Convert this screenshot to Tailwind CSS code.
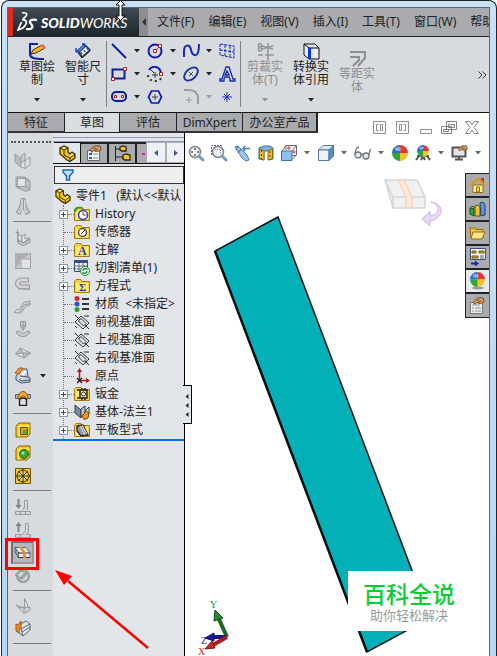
<!DOCTYPE html>
<html lang="zh-CN">

<head>
      <meta charset="UTF-8">
      <meta name="viewport" content="width=device-width, initial-scale=1.0">
      <title>SolidWorks</title>
      <script src="https://cdn.jsdelivr.net/npm/@tailwindcss/browser@4"></script>
</head>

<body class="bg-white font-['Noto_Sans','Noto_Sans_CJK_SC',sans-serif] text-[12px] text-[#222]">
      <!-- Shared shapes -->
      <svg class="hidden">
            <symbol id="folder" viewBox="0 0 16 16">
                  <path d="M.5 3.500L2 1.500h5l1 2h7.500v11H.5z" fill="#f7d23c" stroke="#a8791a" />
                  <path d="M2 5h12v8.500H2z" fill="#ffe873" />
            </symbol>
            <symbol id="part" viewBox="0 0 17 17">
                  <path d="M1 3l4-2 4 2v4l2 2 2-2 3 2v4l-5 3.500-3-1.500-7-6z" fill="#f5c518" stroke="#3d2c00" stroke-width="1.300" />
                  <path d="M1 3l4 2 4-2M5 5v5l6 3 5-4M11 13v3" fill="none" stroke="#3d2c00" />
                  <path d="M3 3l2-1 2 1-2 1zM11 10l2-1.500 1.500 1-3 2z" fill="#fff3a0" />
            </symbol>
            <symbol id="plane" viewBox="0 0 16 16">
                  <path d="M1 8l6-6 8 7-6 6zM1 1l14 14M10 2l5 0M1 12l2 2" fill="none" stroke="#333" />
                  <path d="M4.500 7L7 4.500 12 9.500 9.500 12z" fill="#e2e5ea" stroke="#333" />
            </symbol>
            <symbol id="ball" viewBox="0 0 16 16">
                  <path d="M8 8V0a8 8 0 0 1 8 8z" fill="#e5382c" />
                  <path d="M8 8h8a8 8 0 0 1-8 8z" fill="#f2c12b" />
                  <path d="M8 8v8a8 8 0 0 1-8-8z" fill="#2fa836" />
                  <path d="M8 8H0a8 8 0 0 1 8-8z" fill="#2a6fd0" />
                  <ellipse cx="6" cy="4" rx="3" ry="2" fill="#fff" opacity=".45" />
            </symbol>
            <symbol id="lens" viewBox="0 0 17 17">
                  <path d="M11 11l4 4" stroke="#6f9ccc" stroke-width="3" stroke-linecap="round" />
                  <circle cx="7" cy="7" r="5.500" fill="#f2f5f8" stroke="#81868c" stroke-width="1.500" />
            </symbol>
            <symbol id="down" viewBox="0 0 6 4">
                  <path d="M0 0h6L3 3.500z" fill="currentColor" />
            </symbol>
            <symbol id="hand" viewBox="0 0 17 17">
                  <path d="M5 5l4-4h6l1 4-4 2-4-1-2 2z" fill="#e0a566" stroke="#704018" />
                  <path d="M8 4l3-1m-2 3l4-2" stroke="#704018" fill="none" />
            </symbol>
      </svg>

      <div class="relative min-h-screen overflow-hidden pl-px">
            <!-- Window frame -->
            <div class="flex min-h-screen flex-col rounded-t-lg border-x border-t border-[#1c2430] bg-gradient-to-b from-[#c9e0f5] to-[#b9d7f2] pt-1.5 pr-1.5 pl-[5px]">
                  <div class="flex flex-1 flex-col border-x border-t border-[#5d6976] bg-[#d7dade]">

                        <!-- Menu bar -->
                        <header class="flex h-[29px] border-b border-[#222] bg-[#a9abae]">
                              <div class="flex w-[131px] shrink-0 items-center border-l-[5px] border-[#e02a1c] bg-gradient-to-b from-[#414b54] to-[#1e262d] text-white">
                                    <svg class="ml-1 shrink-0" width="22" height="22" viewBox="0 0 22 22" fill="none" stroke="#fff" stroke-width="1.700" aria-hidden="true">
                                          <path d="M5 2c5-1 7 1 1 6" />
                                          <path d="M5 9c8-1 4 8-4 10l3.500-8" />
                                          <path d="M20 9c-6-1-9 1-6 4 3 3 1 6-5 5" stroke-width="2.200" />
                                    </svg>
                                    <span class="ml-0.5 font-['Lato'] text-[14px] italic"><b class="font-black">SOLID</b>WORKS</span>
                              </div>
                              <button class="grid w-[9px] shrink-0 place-items-center bg-[#8c8e91]" aria-label="收起菜单">
                                    <svg width="4" height="8" viewBox="0 0 4 8"><path d="M4 0v8L0 4z" fill="#333" /></svg>
                              </button>
                              <nav class="flex min-w-0 items-center gap-3.5 overflow-hidden pl-[9px] whitespace-nowrap">
                                    <a href="#">文件(F)</a>
                                    <a href="#">编辑(E)</a>
                                    <a href="#">视图(V)</a>
                                    <a href="#">插入(I)</a>
                                    <a href="#">工具(T)</a>
                                    <a href="#">窗口(W)</a>
                                    <a href="#">帮助</a>
                              </nav>
                        </header>

                        <!-- Ribbon -->
                        <div class="flex h-[76px] border-b border-[#111] pl-1.5 leading-[13px]">
                              <button class="flex w-[46px] flex-col items-center pt-1.5">
                                    <svg width="18" height="17" viewBox="0 0 18 17">
                                          <path d="M10 1H2v10c0 4 4 5 14 5" fill="none" stroke="#0b1fb0" stroke-width="2" />
                                          <path d="M3 11l2-4 9-5 3 3-9 5z" fill="#f7b52c" stroke="#523000" />
                                          <path d="M13 2.500L15 1l3 3-2 2z" fill="#e86a5a" />
                                    </svg>
                                    <span class="w-9 break-all">草图绘制</span>
                                    <svg class="mt-3" width="6" height="4"><use href="#down" /></svg>
                              </button>
                              <button class="flex w-[46px] flex-col items-center pt-1.5">
                                    <svg width="17" height="17" viewBox="0 0 17 17">
                                          <path d="M4 9L11 3l4 4-8 7z" fill="#eef3fb" stroke="#234" stroke-width="1.500" />
                                          <path d="M1 9l9-8M1 9V5m0 4h3M10 1H7m3 0v3M7 11l-1-2m4 0L9 7m4 0l-1-2" fill="none" stroke="#1746c9" stroke-width="1.500" />
                                          <path d="M3 10l4 5 8-7" fill="none" stroke="#222" />
                                    </svg>
                                    <span class="w-9 break-all">智能尺寸</span>
                                    <svg class="mt-3" width="6" height="4"><use href="#down" /></svg>
                              </button>
                              <div class="mt-1 h-[66px] w-px bg-[#7d8084]"></div>

                              <div class="mt-0.5 grid h-[69px] grid-cols-[24px_12px_24px_12px_24px_12px_24px] grid-rows-3 place-items-center">
                                    <button aria-label="直线"><svg width="16" height="16"><path d="M1 1l14 14" stroke="#0b1f9c" stroke-width="2" /></svg></button>
                                    <button aria-label="直线选项"><svg width="6" height="4"><use href="#down" /></svg></button>
                                    <button aria-label="圆">
                                          <svg width="16" height="16"><circle cx="8" cy="8" r="6.500" fill="none" stroke="#0b1fb0" stroke-width="2" /><path d="M8 8l4-4" stroke="#444" /><path d="M6.500 6.500h3v3h-3zM11.500 1.500h3v3h-3z" fill="#fff" stroke="#b01818" /></svg>
                                    </button>
                                    <button aria-label="圆选项"><svg width="6" height="4"><use href="#down" /></svg></button>
                                    <button aria-label="样条曲线"><svg width="17" height="16"><path d="M1 14V8c0-7 6-7 7-1s8 10 8-6" fill="none" stroke="#1428b8" stroke-width="2" /></svg></button>
                                    <button aria-label="样条曲线选项"><svg width="6" height="4"><use href="#down" /></svg></button>
                                    <button aria-label="基准面">
                                          <svg width="16" height="16" fill="none" stroke="#1428b8" stroke-dasharray="3 1"><path d="M1 1v11l14 3V3zM1 7l14 2M6 2v11M11 3v11" /></svg>
                                    </button>

                                    <button aria-label="矩形">
                                          <svg width="16" height="14"><path d="M1.500 2.500h12v9h-12z" fill="none" stroke="#0b1f9c" stroke-width="2" /><path d="M12.500 .5h3v3h-3zM.5 10.500h3v3h-3z" fill="#fff" stroke="#b01818" /></svg>
                                    </button>
                                    <button aria-label="矩形选项"><svg width="6" height="4"><use href="#down" /></svg></button>
                                    <button aria-label="圆弧">
                                          <svg width="16" height="16" fill="none"><path d="M1 9c0 8 14 8 14 0" stroke="#333" stroke-width="2" stroke-dasharray="2 3" /><path d="M2 4c3-5 11-4 12 3" stroke="#0b1fb0" stroke-width="2" /><path d="M8 6v6M5 9h6M4 4l3 3" stroke="#333" /><path d="M12.500 6.500h3v3h-3z" fill="#fff" stroke="#b01818" /></svg>
                                    </button>
                                    <button aria-label="圆弧选项"><svg width="6" height="4"><use href="#down" /></svg></button>
                                    <button aria-label="椭圆">
                                          <svg width="16" height="16"><ellipse cx="8" cy="8" rx="8" ry="5" transform="rotate(-42 8 8)" fill="none" stroke="#1b2f9e" stroke-width="1.800" /><path d="M6 6l4 4m0-4l-4 4" stroke="#555" /></svg>
                                    </button>
                                    <button aria-label="椭圆选项"><svg width="6" height="4"><use href="#down" /></svg></button>
                                    <button aria-label="文字">
                                          <svg width="17" height="16" fill="none" stroke="#1428b8"><path d="M7 1h3l4 12h2v2h-5v-2l-1-2H6l-1 2v2H1v-2h2zM8 5L6 9h4z" stroke-width="1.300" /></svg>
                                    </button>

                                    <button aria-label="槽口">
                                          <svg width="16" height="11"><rect x="1" y="1" width="14" height="9" rx="4" fill="none" stroke="#0b1f9c" stroke-width="2" /><path d="M3.500 4.500h2v2h-2zM10.500 4.500h2v2h-2z" fill="#fff" stroke="#b01818" /></svg>
                                    </button>
                                    <button aria-label="槽口选项"><svg width="6" height="4"><use href="#down" /></svg></button>
                                    <button aria-label="多边形">
                                          <svg width="16" height="14"><path d="M4.500 1h7l3 6-3 6h-7l-3-6z" fill="none" stroke="#0b1fb0" stroke-width="1.700" /><path d="M8 4v6M5 7h6" stroke="#444" /></svg>
                                    </button>
                                    <span></span>
                                    <button aria-label="圆角" disabled><svg width="16" height="16" fill="none" stroke="#9b9da0"><path d="M1 1h5c6 0 9 3 9 9v5" stroke-width="2" /><path d="M6 8v6M3 11h6" /></svg></button>
                                    <button class="text-[#9b9da0]" aria-label="圆角选项" disabled><svg width="6" height="4"><use href="#down" /></svg></button>
                                    <button aria-label="点"><svg width="10" height="10"><path d="M5 0v10M0 5h10M2 2l6 6M8 2L2 8" stroke="#2030c8" /></svg></button>
                              </div>
                              <div class="mx-px mt-1 h-[66px] w-px bg-[#7d8084]"></div>

                              <button class="flex w-[46px] flex-col items-center pt-1.5 text-[#8c8e91]" disabled>
                                    <svg width="17" height="17" viewBox="0 0 17 17" fill="none" stroke="#929497" stroke-width="1.500">
                                          <path d="M11 0v17M1 12h5M8 12h9M5 3l11 3M5 6l11-3" />
                                          <circle cx="3" cy="2.500" r="1.700" /><circle cx="3" cy="6.500" r="1.700" />
                                    </svg>
                                    <span class="w-9 text-center break-all">剪裁实体(T)</span>
                                    <svg class="mt-3" width="6" height="4"><use href="#down" /></svg>
                              </button>
                              <button class="flex w-[46px] flex-col items-center pt-1.5">
                                    <svg width="17" height="17" viewBox="0 0 17 17">
                                          <path d="M1 1h11l4 4v11H6l-5-4zM1 1l5 4h10M6 5v11" fill="#e9ecf0" stroke="#111" />
                                          <path d="M6.500 5v11" stroke="#1030f0" stroke-width="3" />
                                    </svg>
                                    <span class="w-9 break-all">转换实体引用</span>
                                    <svg class="mt-3" width="6" height="4"><use href="#down" /></svg>
                              </button>
                              <button class="flex w-[46px] flex-col items-center pt-3.5 text-[#8c8e91]" disabled>
                                    <svg width="17" height="16" viewBox="0 0 17 16" fill="none" stroke="#8c8e91" stroke-width="2"><path d="M1 1h15v6l-7 8M1 6h9v3l-6 6" /></svg>
                                    <span class="w-9 text-center break-all">等距实体</span>
                              </button>
                              <button class="mr-0.5 ml-auto text-[#333]" aria-label="更多">
                                    <svg width="9" height="8" fill="none" stroke="#333"><path d="M.5.5L4 4 .5 7.500M4.500.5L8 4 4.500 7.500" /></svg>
                              </button>
                        </div>

                        <!-- Command tabs and document window buttons -->
                        <div class="relative z-10 flex h-5 bg-white">
                              <nav class="flex shrink-0 border-b-2 border-[#333] bg-[#a9abae] leading-[17px]">
                                    <button class="w-[57px] border-r border-[#222]">特征</button>
                                    <button class="-mb-0.5 w-[55px] border-r border-b border-[#222] bg-[#dadde1]">草图</button>
                                    <button class="w-[57px] border-r border-[#222]">评估</button>
                                    <button class="w-[66px] border-r border-[#222]">DimXpert</button>
                                    <button class="w-[75px] border-r-2 border-[#222]">办公室产品</button>
                              </nav>
                              <div class="mt-2 mr-1.5 ml-auto flex h-[13px]">
                                    <button class="grid w-[23px] place-items-center" aria-label="左侧平铺"><svg width="13" height="13" fill="none" stroke="#8b8f96"><path d="M.5.5h12v12H.5zM5.500 3.500h-2v6h2M7.500 3.500h2v6h-2z" /></svg></button>
                                    <button class="grid w-[23px] place-items-center" aria-label="右侧平铺"><svg width="13" height="13" fill="none" stroke="#8b8f96"><path d="M.5.5h12v12H.5zM3.500 3.500h2v6h-2zM7.500 3.500h2v6h-2" /></svg></button>
                                    <button class="grid w-[23px] place-items-center" aria-label="最小化"><svg width="12" height="13" fill="#fff" stroke="#8b8f96"><path d="M.5 8.500h11v4H.5z" /></svg></button>
                                    <button class="grid w-[23px] place-items-center" aria-label="还原"><svg width="16" height="13" fill="#fff" stroke="#7d8188"><path d="M5.500.5h10v8h-10zM7.500 3.500h6v3h-6zM.5 5.500h10v7H.5zM2.500 8.500h5v2h-5z" /></svg></button>
                                    <button class="grid w-[23px] place-items-center" aria-label="关闭"><svg width="14" height="13" fill="#fff" stroke="#7d8188"><path d="M.5.500h4L7 4l2.500-3.500h4L9 6.500l4.500 6h-4L7 9l-2.500 3.500h-4l4.500-6z" /></svg></button>
                              </div>
                        </div>

                        <div class="flex flex-1">
                              <!-- Sheet metal toolbar -->
                              <aside class="flex w-[45px] shrink-0 flex-col pt-2 pl-[3px]">
                                    <div class="mb-1.5 w-10 border-t-2 border-dotted border-[#555]"></div>
                                    <button class="grid h-[23px] w-[23px] place-items-center" aria-label="基体法兰" disabled><svg width="17" height="17" stroke="#9b9da0"><path d="M1 2l6 5v8l-6-5z" fill="#b9bbbe" /><path d="M7 7v8l4 1.500 5-4V5l-5 4z" fill="#dfe0e2" /><path d="M7 4l4-3v7L7 11z" fill="#cccdd0" /><path d="M11 9v7" /></svg></button>
                                    <button class="grid h-[23px] w-[23px] place-items-center" aria-label="转换到钣金" disabled><svg width="16" height="16" stroke="#999b9e"><path d="M1 1h9l5 4v9l-4 1.500L1 11z" fill="#c0c2c5" /><path d="M2.500 2.500h8v8h-8z" fill="#e3e4e6" /><path d="M10.500 2.500L15 6M10.500 10.500L15 13M2.500 10.500L6 13" fill="none" /></svg></button>
                                    <button class="grid h-[23px] w-[23px] place-items-center" aria-label="放样折弯" disabled><svg width="16" height="17" stroke="#98999c"><path d="M6 .5h4l1 7 4 7-4 2-2-5H7l-2 5-4-2 4-7z" fill="#bcbec1" /><path d="M7 1v10L4 15M10 2l-1 9 2 4" fill="none" stroke="#e4e5e7" /><path d="M8.500 1v11" /></svg></button>
                                    <hr class="mt-[3px] mb-1 ml-0.5 w-[38px] border-[#77797c]">
                                    <button class="grid h-[23px] w-[23px] place-items-center" aria-label="边线法兰" disabled><svg width="16" height="16" stroke="#98999c"><path d="M2.500 0v12M.5 2.500h4" fill="none" /><path d="M3 4l4 2v6l-4-2z" fill="#d9dadd" /><path d="M3 10l5 3 7-4v3l-7 4-5-3z" fill="#c2c4c7" /><path d="M7 6l3-2v5l5-1-7 5-1-1z" fill="#e3e4e6" /></svg></button>
                                    <button class="grid h-[23px] w-[23px] place-items-center" aria-label="斜接法兰" disabled><svg width="16" height="16"><path d="M0 0h16L10 5H5v5l-5 6z" fill="#adafb2" /><path d="M16 0v16H0l5-6V5h5z" fill="#c9cbce" /><path d="M6 6h10v10H6z" fill="#e1e2e4" /><path d="M0 0l6 6h9.500M6 6v9.500M15.500 0v15.500H0" stroke="#9fa1a4" fill="none" /></svg></button>
                                    <button class="grid h-[23px] w-[23px] place-items-center" aria-label="褶边" disabled><svg width="16" height="14"><path d="M14 3H7C1 3 1 10 7 10h8" fill="none" stroke="#98999c" stroke-width="5" /><path d="M13 3H7C1 3 1 10 7 10h7" fill="none" stroke="#d3d4d7" stroke-width="3" /><path d="M3 12h12" stroke="#98999c" /></svg></button>
                                    <button class="grid h-[23px] w-[23px] place-items-center" aria-label="转折" disabled><svg width="17" height="14" fill="#d6d7da" stroke="#98999c"><path d="M.5 12.500l2-3h3l4-7 6.500-1.500v4l-4 1-5 7z" /><path d="M6 12l4-7 6-1.500" fill="none" /></svg></button>
                                    <button class="grid h-[23px] w-[23px] place-items-center" aria-label="绘制的折弯" disabled><svg width="16" height="17" fill="#c9cbce" stroke="#939598"><path d="M5.500.5h5v5l-2.500 4-2.500-4zM5.500 5h5M8 1v8M1 11l3-1c3 3 6 3 8 0l3 1c-3 6-11 6-14 0z" /></svg></button>
                                    <button class="grid h-[23px] w-[23px] place-items-center" aria-label="交叉折断" disabled><svg width="16" height="12" stroke="#98999c"><path d="M.5 7L5 1l10.500 5L9 11z" fill="#e0e1e3" /><path d="M5 1l3 5-7.500 1M8 6h7.500L9 11z" fill="#b9bbbe" /></svg></button>
                                    <div class="flex h-[23px] items-center">
                                          <button class="grid h-[23px] w-[23px] place-items-center" aria-label="边角"><svg width="17" height="17"><path d="M2 9L8 2h5l1 8 2 1v4l-9 1-5-3z" fill="#c5d0dc" stroke="#4a5765" /><path d="M6 9l8 1M5 12l2 2 9-1" stroke="#4a5765" fill="none" /><path d="M8 8l4-4" stroke="#fff" stroke-width="2" /><path d="M1 6l4-5h4L5 7z" fill="#f29a35" stroke="#aa5d10" /></svg></button>
                                          <button class="ml-1.5" aria-label="边角选项"><svg width="6" height="4"><use href="#down" /></svg></button>
                                    </div>
                                    <button class="grid h-[23px] w-[23px] place-items-center" aria-label="成形工具"><svg width="16" height="15"><path d="M.5 3.500H4v4H.5zM12 3.500h3.500v4H12z" fill="#b8c2cd" stroke="#53606d" /><path d="M3 5c2-6 8-6 10 0v3h-2C10 4 6 4 5 8H3z" fill="#f2a336" stroke="#7d5010" /><path d="M4.500 14.500V10c0-4 7-4 7 0v4.500z" fill="#ddd" stroke="#222" stroke-width="1.400" /></svg></button>
                                    <hr class="mt-[3px] mb-1 ml-0.5 w-[38px] border-[#77797c]">
                                    <button class="grid h-[23px] w-[23px] place-items-center" aria-label="拉伸切除"><svg width="16" height="16"><path d="M1 4l3-3h11v11l-3 3H1z" fill="#f3c81d" stroke="#8a6400" /><path d="M4 4h11M4 4v11" stroke="#fff08a" /><path d="M5.500 5.500h7v7h-7z" fill="#d9a50c" stroke="#6f5000" /><path d="M8 8h4v4H8z" fill="#45a845" /></svg></button>
                                    <button class="grid h-[23px] w-[23px] place-items-center" aria-label="简单直孔"><svg width="16" height="16"><path d="M1 4l3-3h11v11l-3 3H1z" fill="#f3c81d" stroke="#8a6400" /><path d="M4 4h11M4 4v11" stroke="#fff08a" /><circle cx="9" cy="9" r="4.500" fill="#37a93a" stroke="#305c00" /><circle cx="8" cy="8" r="1.500" fill="#a3e39c" /></svg></button>
                                    <button class="grid h-[23px] w-[23px] place-items-center" aria-label="通风口"><svg width="16" height="16"><path d="M.5.5h15v15H.5z" fill="#f5c91d" stroke="#6a4d00" /><g fill="none" stroke="#3c2f00"><circle cx="8" cy="8" r="6" /><circle cx="8" cy="8" r="3" stroke="#fff" /><path d="M8 1v14M1 8h14M3 3l10 10M13 3L3 13" /></g></svg></button>
                                    <hr class="mt-[3px] mb-1 ml-0.5 w-[38px] border-[#77797c]">
                                    <button class="grid h-[23px] w-[23px] place-items-center" aria-label="展开" disabled><svg width="16" height="16" fill="#d3d5d8" stroke="#98999c"><path d="M.5 12.500h15v3H.5zM5.500 12v3M10.500 12v3M8.500 11l1-4V1.500h3V11" /><path d="M3.500 0v8" stroke-width="2" stroke="#808285" /><path d="M.5 6h6L3.500 10z" fill="#808285" stroke="none" /></svg></button>
                                    <button class="grid h-[23px] w-[23px] place-items-center" aria-label="折叠" disabled><svg width="16" height="16" fill="#d3d5d8" stroke="#98999c"><path d="M.5 12.500h7l3-4v-7h3V9l-2 3.500h4v3H.5zM5.500 12v3" /><path d="M3.500 10V3" stroke-width="2" stroke="#808285" /><path d="M.5 4h6L3.500 0z" fill="#808285" stroke="none" /></svg></button>
                                    <button class="grid h-[23px] w-[23px] place-items-center border-2 border-[#6c6f73] border-r-[#999] border-b-[#999] bg-[#b4b7bb]" aria-label="展平" aria-pressed="true"><svg width="17" height="13"><path d="M1 1.500h11l4 5v5H4.500V7z" fill="#e7eaee" stroke="#5d6670" /><path d="M1 1.500L4.500 7v4.500L1 6z" fill="#9aa5b2" stroke="#5d6670" /><path d="M4 7h12M4 11.500h12" stroke="#333" /><path d="M5 1h3l4 6v5H9V7z" fill="#f08a1d" /></svg></button>
                                    <button class="grid h-[23px] w-[23px] place-items-center" aria-label="不折弯" disabled><svg width="17" height="16" fill="none" stroke="#98999c"><path d="M1 7l5-4 8 2-5 6z" fill="#cfd1d4" /><circle cx="9" cy="8" r="6" stroke-width="2" /><path d="M5 12l8-8" stroke-width="2" /></svg></button>
                                    <hr class="my-[3px] ml-0.5 w-[38px] border-[#77797c]">
                                    <button class="grid h-[23px] w-[23px] place-items-center" aria-label="切口" disabled><svg width="16" height="16" stroke="#98999c"><path d="M9.500.5l3 6v4l-3-1z" fill="#dcdddf" /><path d="M1 7l5 2 3 1 6-1v3l-6 3.500z" fill="#d0d2d5" /><path d="M9 10v5M4 10l5-1" fill="none" /></svg></button>
                                    <button class="grid h-[23px] w-[23px] place-items-center" aria-label="插入折弯"><svg width="16" height="17"><path d="M6 4l5-3 4 3v6l-7 6-5-4z" fill="#e2e6eb" stroke="#56616d" /><path d="M6 9l9-5M6 9l2 7M7 12l8-5" fill="none" stroke="#56616d" /><path d="M1 4l2 1 3-4v7L4 9v4l-3-2z" fill="#f28c22" stroke="#a95706" /></svg></button>
                                    <hr class="my-[3px] ml-0.5 w-[38px] border-[#77797c]">
                              </aside>

                              <!-- Feature tree -->
                              <section class="relative w-[132px] shrink-0 border-r border-black bg-[#e2e5ea] pt-1">
                                    <div class="h-[5px] border-y border-[#8f97b8]"></div>
                                    <div class="flex h-[22px] overflow-hidden border-b border-[#111] pl-px">
                                          <button class="grid w-[27px] shrink-0 place-items-center border-t border-r border-[#111] bg-[#e2e5ea]" aria-label="设计树"><svg width="17" height="17"><use href="#part" /></svg></button>
                                          <button class="grid w-7 shrink-0 place-items-center border-t-2 border-r-2 border-[#222] bg-[#a9abae]" aria-label="属性"><svg width="17" height="17"><path d="M1.500 5.500h12v10h-12z" fill="#eef3fa" stroke="#667" /><path d="M3 8h3v2H3zM3 12h3v2H3z" fill="#2e62c8" /><path d="M7 9h5M7 13h5" stroke="#888" /><use href="#hand" width="16" height="16" /></svg></button>
                                          <button class="grid w-7 shrink-0 place-items-center border-t-2 border-r-2 border-[#222] bg-[#a9abae]" aria-label="配置"><svg width="17" height="17"><path d="M1.500 1v15M2 4h5M2 12h7" stroke="#222" fill="none" /><path d="M6 2l3-1 3 1v4H8L6 5zM9 10l3-1 4 1v5h-5l-2-1z" fill="#f4c61f" stroke="#332400" stroke-width="1.300" /></svg></button>
                                          <button class="w-[9px] shrink-0 border-t-2 border-[#222] bg-[#a9abae]" aria-label="尺寸专家"><svg width="9" height="4"><path d="M5 1h3v2H5z" fill="#d117c8" /></svg></button>
                                          <button class="grid w-5 shrink-0 place-items-center border border-[#aaadb3] bg-[#eff1f4]" aria-label="向左"><svg width="4" height="6"><path d="M4 0v6L0 3z" fill="#46598c" /></svg></button>
                                          <button class="grid w-5 shrink-0 place-items-center border border-[#aaadb3] bg-[#eff1f4]" aria-label="向右"><svg width="4" height="6"><path d="M0 0v6l4-3z" fill="#46598c" /></svg></button>
                                    </div>
                                    <label class="mt-0.5 ml-px flex h-[18px] items-center border border-[#333] bg-[#eeeff1] pl-[7px]">
                                          <svg class="shrink-0" width="12" height="12"><path d="M1 1h10v2L7.500 7v4h-3V7L1 3z" fill="#bfe3fb" stroke="#1565c0" stroke-width="1.500" /></svg>
                                          <input class="w-full min-w-0 bg-transparent outline-none" aria-label="筛选">
                                    </label>

                                    <div class="mt-[3px] flex h-[18px] items-center overflow-hidden pl-0.5 whitespace-pre">
                                          <svg class="shrink-0" width="16" height="16"><use href="#part" /></svg>
                                          <span class="ml-[5px]">零件1   (默认&lt;&lt;默认</span>
                                    </div>
                                    <ul class="ml-2.5 border-l border-dotted border-[#777] leading-[18px]">
                                          <li class="-ml-[5px] flex h-[18px] items-center"><button class="grid h-[9px] w-[9px] place-items-center border border-[#8a95a5] bg-white" aria-label="展开 History"><svg width="5" height="5"><path d="M0 2.500h5M2.500 0v5" stroke="#234a8c" /></svg></button><span class="w-1.5 border-t border-dotted border-[#777]"></span>
                                                <svg width="16" height="16"><use href="#folder" /><circle cx="9" cy="9" r="4.500" fill="#fff" stroke="#2842c2" stroke-width="1.500" /><path d="M9 6v3h3" stroke="#c22" fill="none" /><path d="M1 6c0-4 5-6 8-3" stroke="#2f9b35" stroke-width="2" fill="none" /></svg><span class="ml-[5px]">History</span></li>
                                          <li class="flex h-[18px] items-center"><span class="w-2.5 border-t border-dotted border-[#777]"></span>
                                                <svg width="16" height="16"><use href="#folder" /><circle cx="8.500" cy="8.500" r="4" fill="#fff" stroke="#555" stroke-width="1.500" /><path d="M7 10l4-4" stroke="#222" /></svg><span class="ml-[5px]">传感器</span></li>
                                          <li class="-ml-[5px] flex h-[18px] items-center"><button class="grid h-[9px] w-[9px] place-items-center border border-[#8a95a5] bg-white" aria-label="展开 注解"><svg width="5" height="5"><path d="M0 2.500h5M2.500 0v5" stroke="#234a8c" /></svg></button><span class="w-1.5 border-t border-dotted border-[#777]"></span>
                                                <svg width="16" height="16"><use href="#folder" /><text x="4" y="13" font-family="Liberation Serif" font-size="12" font-weight="bold" fill="#1a3fb5">A</text></svg><span class="ml-[5px]">注解</span></li>
                                          <li class="-ml-[5px] flex h-[18px] items-center"><button class="grid h-[9px] w-[9px] place-items-center border border-[#8a95a5] bg-white" aria-label="展开 切割清单"><svg width="5" height="5"><path d="M0 2.500h5M2.500 0v5" stroke="#234a8c" /></svg></button><span class="w-1.5 border-t border-dotted border-[#777]"></span>
                                                <svg width="16" height="16"><path d="M.5.5h13v11H.5z" fill="#f3f6fb" stroke="#3c4960" /><path d="M0 0h14v3H0z" fill="#3c4f80" /><path d="M1 6h12M1 9h12M5 3v8M9 3v8" stroke="#5f6c86" /><circle cx="11" cy="11" r="4.500" fill="#e8f7e8" stroke="#23933a" /><path d="M9 11c0-3 4-3 4-1M13 11c0 3-4 3-4 1" stroke="#138529" stroke-width="1.300" fill="none" /></svg><span class="ml-[5px]">切割清单(1)</span></li>
                                          <li class="-ml-[5px] flex h-[18px] items-center"><button class="grid h-[9px] w-[9px] place-items-center border border-[#8a95a5] bg-white" aria-label="展开 方程式"><svg width="5" height="5"><path d="M0 2.500h5M2.500 0v5" stroke="#234a8c" /></svg></button><span class="w-1.5 border-t border-dotted border-[#777]"></span>
                                                <svg width="16" height="16"><use href="#folder" /><text x="5" y="13" font-family="Liberation Serif" font-size="11" font-weight="bold" fill="#1a3fb5">Σ</text></svg><span class="ml-[5px]">方程式</span></li>
                                          <li class="flex h-[18px] items-center whitespace-pre"><span class="w-2.5 border-t border-dotted border-[#777]"></span><svg width="16" height="16"><circle cx="3" cy="2.500" r="2.500" fill="#d92626" /><circle cx="3" cy="8" r="2.500" fill="#2b4fd0" /><circle cx="3" cy="13.500" r="2.500" fill="#28a038" /><path d="M8 3h7M8 8h7M8 13h7" stroke="#333" stroke-width="1.800" /></svg><span class="ml-[5px]">材质  &lt;未指定&gt;</span></li>
                                          <li class="flex h-[18px] items-center"><span class="w-2.5 border-t border-dotted border-[#777]"></span><svg width="16" height="16"><use href="#plane" /></svg><span class="ml-[5px]">前视基准面</span></li>
                                          <li class="flex h-[18px] items-center"><span class="w-2.5 border-t border-dotted border-[#777]"></span><svg width="16" height="16"><use href="#plane" /></svg><span class="ml-[5px]">上视基准面</span></li>
                                          <li class="flex h-[18px] items-center"><span class="w-2.5 border-t border-dotted border-[#777]"></span><svg width="16" height="16"><use href="#plane" /></svg><span class="ml-[5px]">右视基准面</span></li>
                                          <li class="flex h-[18px] items-center"><span class="w-2.5 border-t border-dotted border-[#777]"></span>
                                                <svg width="16" height="16"><path d="M5.500 12V2M5 12.500h9" stroke="#b01818" stroke-width="1.500" /><path d="M3 4l2.500-4L8 4zM12 10l4 2.500-4 2.500z" fill="#b01818" /><path d="M3 10l5 5m0-5l-5 5" stroke="#222" stroke-width="1.300" /></svg><span class="ml-[5px]">原点</span></li>
                                          <li class="-ml-[5px] flex h-[18px] items-center"><button class="grid h-[9px] w-[9px] place-items-center border border-[#8a95a5] bg-white" aria-label="展开 钣金"><svg width="5" height="5"><path d="M0 2.500h5M2.500 0v5" stroke="#234a8c" /></svg></button><span class="w-1.5 border-t border-dotted border-[#777]"></span>
                                                <svg width="16" height="16"><use href="#folder" /><path d="M3 4h3v8H3M6 4h7v8H6zM8 2v2M11 2v2M8 12v2M11 12v2" fill="none" stroke="#222" stroke-width="1.500" /><circle cx="9.500" cy="8" r="2" fill="#fff" stroke="#222" /></svg><span class="ml-[5px]">钣金</span></li>
                                          <li class="-ml-[5px] flex h-[18px] items-center"><button class="grid h-[9px] w-[9px] place-items-center border border-[#8a95a5] bg-white" aria-label="展开 基体-法兰1"><svg width="5" height="5"><path d="M0 2.500h5M2.500 0v5" stroke="#234a8c" /></svg></button><span class="w-1.5 border-t border-dotted border-[#777]"></span>
                                                <svg width="16" height="16"><path d="M1 1l6 5v8L1 9z" fill="#7d8ca0" stroke="#333e4c" /><path d="M7 5l4-3v7l-4 4z" fill="#b9c6d5" stroke="#333e4c" /><path d="M11 7l4-4v7l-4 4z" fill="#d9e0e8" stroke="#333e4c" /><path d="M8 12l4-5 3 2-1 5-4 1.500z" fill="#f0981f" stroke="#7d4a00" /></svg><span class="ml-[5px]">基体-法兰1</span></li>
                                          <li class="-ml-[5px] flex h-[18px] items-center"><button class="grid h-[9px] w-[9px] place-items-center border border-[#8a95a5] bg-white" aria-label="展开 平板型式"><svg width="5" height="5"><path d="M0 2.500h5M2.500 0v5" stroke="#234a8c" /></svg></button><span class="w-1.5 border-t border-dotted border-[#777]"></span>
                                                <svg width="16" height="16"><use href="#folder" /><path d="M3 4l6-1 5 10-7 1-4-5z" fill="#8b949f" stroke="#222" stroke-width="1.300" /><path d="M6 4l5 9M8 3l5 9" stroke="#eee" /></svg><span class="ml-[5px]">平板型式</span></li>
                                    </ul>
                                    <div class="h-0.5 bg-[#0a6cf0]"></div>

                                    <!-- Splitter handle -->
                                    <button class="absolute top-[252px] -right-2 z-10 grid h-[39px] w-[9px] place-items-center border border-l-0 border-black bg-[#e2e5ea]" aria-label="折叠面板">
                                          <svg width="4" height="26" fill="#222"><path d="M3.500 2v5L.5 4.500zM3.500 11v5l-3-2.500zM3.500 20v5l-3-2.500z" /></svg>
                                    </button>
                              </section>

                              <!-- Graphics area -->
                              <main class="relative min-w-0 flex-1 bg-white">
                                    <svg class="absolute inset-0 h-full w-full" aria-hidden="true">
                                          <polygon points="93,84 30,118 182,519 245,485" fill="#04b0b8" stroke="#111" stroke-width="1.500" />
                                          <path d="M30 118l152 401" stroke="#111" stroke-width="2.500" />
                                          <!-- Flatten ghost -->
                                          <g stroke="#d4d5d9" stroke-width="1.500">
                                                <path d="M200 47h32l8 17v11h-32z" fill="#f0f1f3" />
                                                <path d="M200 47l8 17h32M208 64v11" fill="none" />
                                                <path d="M213 47h6l8 17v11h-6V64z" fill="#fdeadb" stroke="#f5d3bd" />
                                          </g>
                                          <path d="M246 69c10 3 9 12-1 14v-5l-8 8 8 7v-5c13-2 16-17 1-19z" fill="#e7d9f2" stroke="#cdb5df" />
                                          <!-- Triad -->
                                          <path d="M42 504L33 484" stroke="#1c6b22" stroke-width="4" />
                                          <path d="M30 477l-1 11 9-3z" fill="#2b8b31" stroke="#124d16" />
                                          <path d="M42 504H28" stroke="#16168c" stroke-width="4" />
                                          <path d="M20 505l9-5v8z" fill="#1a1ab0" stroke="#101060" />
                                          <path d="M42 504l-14 8" stroke="#a81c1c" stroke-width="4" />
                                          <path d="M20 516l7-8 3 7z" fill="#d02626" stroke="#801010" />
                                          <g font-family="Liberation Serif" font-size="10">
                                                <text x="25" y="475" fill="#168a20">Y</text>
                                                <text x="16" y="511" fill="#1a1ac0">Z</text>
                                                <text x="13" y="522" fill="#e01c1c">X</text>
                                          </g>
                                    </svg>

                                    <!-- View toolbar -->
                                    <div class="relative flex h-10 items-center text-[#666]">
                                          <button class="grid w-[23px] shrink-0 place-items-center" aria-label="整屏显示全图"><svg width="17" height="17"><use href="#lens" /><path d="M7 3v2M7 9v2M3 7h2M9 7h2" stroke="#555" stroke-width="1.500" /></svg></button>
                                          <button class="grid w-[23px] shrink-0 place-items-center" aria-label="局部放大"><svg width="17" height="17"><path d="M.5 10V.5H11" fill="none" stroke="#666" stroke-dasharray="2 1" /><use href="#lens" /><path d="M4 4.500h5.500v5" fill="none" stroke="#888" stroke-dasharray="1 1" /></svg></button>
                                          <button class="grid w-[23px] shrink-0 place-items-center" aria-label="上一视图"><svg width="17" height="17"><path d="M1 2l3-1 9 9 2 5-3 1-4-3z" fill="#9cc5ea" stroke="#4d7eae" /><path d="M4 1l-2 4M7 4L4 8" stroke="#375f87" /><path d="M9 3.500h7M11 1L9 3.500 11 6" fill="none" stroke="#4a79bd" stroke-width="1.500" /></svg></button>
                                          <button class="grid w-[23px] shrink-0 place-items-center" aria-label="剖面视图"><svg width="16" height="16"><path d="M1 3l5-2h6l3 2v11l-4 1V6H6v9l-5-1z" fill="#7fb0e0" stroke="#3e6d9e" /><path d="M1.500 4L6 5.500V15l-4.500-1.500zM10 5.500L14.500 4v9.500L10 15z" fill="#f0c22a" stroke="#8c6d0c" /><path d="M3.500 5v9M12 6v8" stroke="#333" stroke-dasharray="2 2" /></svg></button>
                                          <button class="grid w-[23px] shrink-0 place-items-center" aria-label="视图定向"><svg width="16" height="16"><path d="M5 .5h10.500V10l-4 4M5 .5L1 6M15 1l-4 5M5 1v4M11 10.500h4" fill="none" stroke="#666" /><path d="M.5 6H11v9.500H.5z" fill="#8fc0ee" stroke="#3c72aa" /><path d="M6 3h4M8 1v4M11 7h4M13 5v4" stroke="#d44" /></svg></button>
                                          <button class="grid w-3.5 shrink-0 place-items-center" aria-label="视图定向选项"><svg width="6" height="4"><use href="#down" /></svg></button>
                                          <button class="grid w-[23px] shrink-0 place-items-center" aria-label="显示样式"><svg width="16" height="16" stroke="#54779d"><path d="M.5 5L5 .5h10.500L11 5z" fill="#dcebf8" /><path d="M.5 5H11v10.500H.5z" fill="#edf4fb" /><path d="M11 5L15.500.5V11L11 15.500z" fill="#4d8edb" /></svg></button>
                                          <button class="grid w-3.5 shrink-0 place-items-center" aria-label="显示样式选项"><svg width="6" height="4"><use href="#down" /></svg></button>
                                          <button class="grid w-[23px] shrink-0 place-items-center" aria-label="隐藏/显示项目"><svg width="17" height="14" fill="#dfeaf3" stroke="#70767e" stroke-width="1.300"><circle cx="4" cy="9" r="3" /><circle cx="12" cy="10" r="3" /><path d="M1 8C1 4 3 1 5 1M7 9c1-1 2-1 2 0M15 9c0-4 2-5 1-6" fill="none" /></svg></button>
                                          <button class="grid w-3.5 shrink-0 place-items-center" aria-label="隐藏/显示选项"><svg width="6" height="4"><use href="#down" /></svg></button>
                                          <button class="grid w-[23px] shrink-0 place-items-center" aria-label="编辑外观"><svg width="16" height="16"><use href="#ball" /></svg></button>
                                          <button class="grid w-[23px] shrink-0 place-items-center" aria-label="应用布景"><svg width="16" height="16"><path d="M2 11h12M4 11l-3 4M12 11l3 4M6 15l2-4 2 4" fill="none" stroke="#555" stroke-width="2" /><use href="#ball" x="2" width="12" height="12" /></svg></button>
                                          <button class="grid w-3.5 shrink-0 place-items-center" aria-label="应用布景选项"><svg width="6" height="4"><use href="#down" /></svg></button>
                                          <button class="grid w-[23px] shrink-0 place-items-center" aria-label="视图设定"><svg width="17" height="16"><path d="M1.500 2.500h13v9h-13z" fill="#e1e6ec" stroke="#555" stroke-width="2" /><path d="M8 12v2M4 14.500h8" stroke="#555" stroke-width="2" /><use href="#hand" x="4" width="13" height="13" /></svg></button>
                                          <button class="grid w-3.5 shrink-0 place-items-center" aria-label="视图设定选项"><svg width="6" height="4"><use href="#down" /></svg></button>
                                    </div>

                                    <!-- Task pane tabs -->
                                    <nav class="relative ml-auto flex w-6 flex-col border-t border-l border-[#222]">
                                          <button class="grid h-6 place-items-center border-b-2 border-[#222] bg-[#a9abae]" aria-label="资源"><svg width="16" height="16"><path d="M11 1h3v5h-3z" fill="#c7342a" /><path d="M3 8h10v7.500H3z" fill="#fff3b0" stroke="#9a6a00" /><path d="M.5 8.500L8 1.500l7.500 7" fill="none" stroke="#d59a16" stroke-width="2.200" /><path d="M6.500 10h3v5h-3z" fill="#f6cf42" stroke="#9a6a00" /></svg></button>
                                          <button class="grid h-6 place-items-center border-b-2 border-[#222] bg-[#a9abae]" aria-label="设计库"><svg width="17" height="16"><path d="M1 7l4 1v7l-4-2z" fill="#32a342" stroke="#0d4a17" /><path d="M6 5l3-1 2 2v9H6z" fill="#f0c22a" stroke="#6d5200" /><path d="M11 2l3-1 2 3v10l-4 1z" fill="#5d92e0" stroke="#203f7a" /><path d="M1 7l2-2 3 2" fill="#8ad694" stroke="#0d4a17" /></svg></button>
                                          <button class="grid h-6 place-items-center border-b-2 border-[#222] bg-[#a9abae]" aria-label="文件探索器"><svg width="17" height="14"><path d="M1 2h5l1 1.500h7V12H2z" fill="#f2c144" stroke="#9a6a00" /><path d="M4 6h12l-3 7H2z" fill="#ffe593" stroke="#9a6a00" /></svg></button>
                                          <button class="grid h-6 place-items-center border-b-2 border-[#222] bg-[#a9abae]" aria-label="视图调色板"><svg width="16" height="18"><path d="M.5.5h15v11H.5z" fill="#f0f4fa" stroke="#34507c" /><path d="M2 3h4v2H2zM9 3h5v2H9zM2 8h6v2H2z" fill="#e4b820" stroke="#6d5200" /><path d="M10 7h4v4h-4z" fill="#9ab" /><path d="M1 15.500h6" stroke="#1420b8" stroke-width="2" /><path d="M5 12.500l4 3-4 3z" fill="#1420b8" /></svg></button>
                                          <button class="grid h-6 place-items-center border-b-2 border-[#222] bg-[#e6e9ed]" aria-label="外观"><svg width="16" height="18"><ellipse cx="8" cy="16" rx="6" ry="1.500" fill="#999" /><use href="#ball" width="15" height="15" /></svg></button>
                                          <button class="grid h-6 place-items-center border-b border-[#222] bg-[#a9abae]" aria-label="自定义属性"><svg width="17" height="17"><path d="M1.500 5.500h12v11h-12z" fill="#f0f0f0" stroke="#777" /><path d="M3 8h2M6 8h5M3 11h2M6 11h6M3 14h2M6 14h6" stroke="#888" /><use href="#hand" width="16" height="16" /></svg></button>
                                    </nav>

                                    <!-- Watermark -->
                                    <div class="absolute bottom-[25px] left-[163px] flex h-[60px] w-[122px] flex-col items-center justify-center bg-white font-['Noto_Sans_CJK_SC',sans-serif]">
                                          <strong class="text-[23px] leading-7 font-medium text-[#08ce32]">百科全说</strong>
                                          <span class="text-[13px] leading-4 text-[#999]">助你轻松解决</span>
                                    </div>
                              </main>
                        </div>
                  </div>
            </div>

            <!-- Highlight box, arrow and resize cursor -->
            <div class="pointer-events-none absolute top-[538px] left-[5px] h-8 w-[34px] border-[3px] border-[#fe0000]"></div>
            <svg class="pointer-events-none absolute top-[565px] left-[50px]" width="105" height="90" aria-hidden="true">
                  <path d="M98 83L18 16" stroke="#fe0000" stroke-width="2.500" />
                  <path d="M5 5l17 6-8 9z" fill="#fe0000" />
            </svg>
            <svg class="pointer-events-none absolute top-0 left-[115px]" width="11" height="22" aria-hidden="true">
                  <path d="M5.500 .5L10 5H7v11h3l-4.500 4.500L1 16h3V5H1z" fill="#fff" stroke="#111" />
            </svg>
      </div>
</body>

</html>
